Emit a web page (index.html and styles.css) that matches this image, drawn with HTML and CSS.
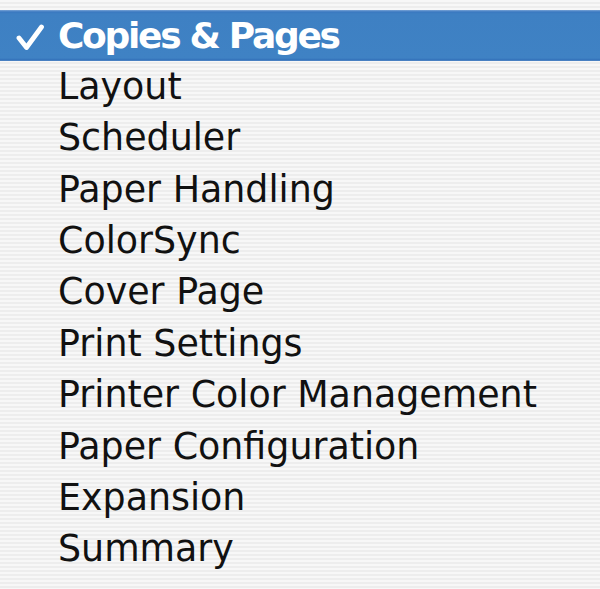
FILE: index.html
```html
<!DOCTYPE html>
<html>
<head>
<meta charset="utf-8">
<link rel="stylesheet" href="styles.css">
</head>
<body>
<ul class="menu">
  <li class="item selected"><span class="check"><svg width="28" height="28" viewBox="0 0 28 28"><path d="M3 15 L10.5 24.5 L25.5 4" fill="none" stroke="#fff" stroke-width="4.8" stroke-linecap="round" stroke-linejoin="round"/></svg></span><span class="label">Copies &amp; Pages</span></li>
  <li class="item"><span class="check"></span><span class="label">Layout</span></li>
  <li class="item"><span class="check"></span><span class="label">Scheduler</span></li>
  <li class="item"><span class="check"></span><span class="label">Paper Handling</span></li>
  <li class="item"><span class="check"></span><span class="label">ColorSync</span></li>
  <li class="item"><span class="check"></span><span class="label">Cover Page</span></li>
  <li class="item"><span class="check"></span><span class="label">Print Settings</span></li>
  <li class="item"><span class="check"></span><span class="label">Printer Color Management</span></li>
  <li class="item"><span class="check"></span><span class="label">Paper Configuration</span></li>
  <li class="item"><span class="check"></span><span class="label">Expansion</span></li>
  <li class="item"><span class="check"></span><span class="label">Summary</span></li>
</ul>
</body>
</html>
```

FILE: styles.css
```css
html, body {
  margin: 0;
  padding: 0;
  width: 600px;
  height: 589px;
  overflow: hidden;
}
body {
  background: repeating-linear-gradient(to bottom, #f7f7f7 0px, #f7f7f7 2px, #ededed 2px, #ededed 4px);
  font-family: "DejaVu Sans", "Verdana", sans-serif;
}
.menu {
  list-style: none;
  margin: 0;
  padding: 10px 0 0 0;
}
.item {
  display: flex;
  align-items: center;
  height: 51.4px;
  font-size: 36.4px;
  color: #111;
}
.check {
  width: 58px;
  flex: none;
  display: flex;
  align-items: center;
  justify-content: flex-start;
  padding-left: 16px;
  padding-top: 2px;
  box-sizing: border-box;
}
.selected {
  background: linear-gradient(to bottom, #79a3d6 0px, #3a78c0 2px, #3e80c3 4px, #3f82c4 48px, #3371b9 50px, #6f9bd2 51.4px);
  color: #fff;
  font-weight: bold;
  font-size: 36px;
  letter-spacing: -2.3px;
}
.label {
  white-space: nowrap;
  line-height: 1;
}
```
